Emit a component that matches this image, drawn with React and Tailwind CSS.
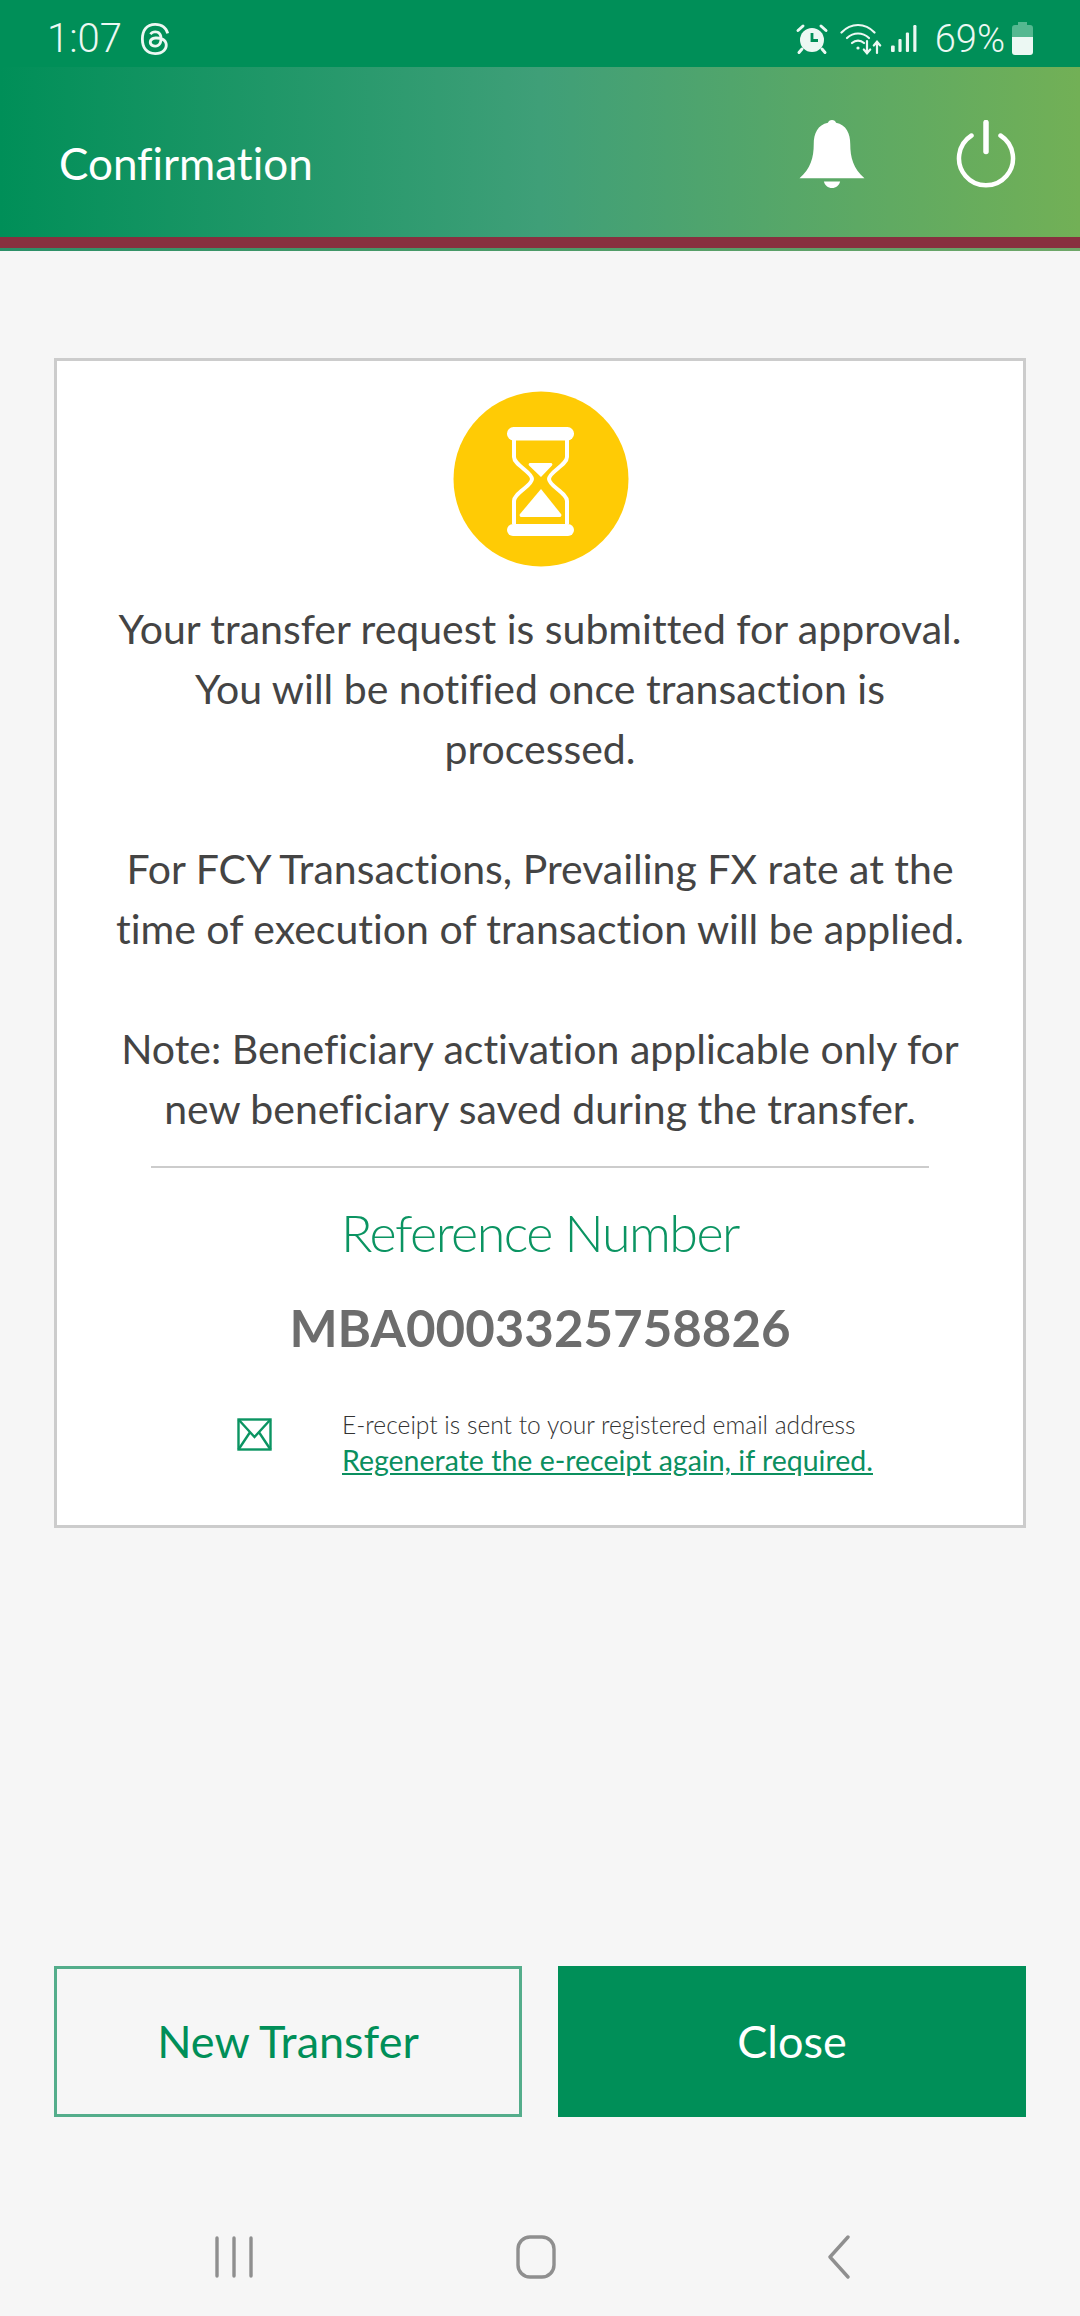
import { SiThreads } from "react-icons/si";

const bodyFont = { fontFamily: '"Lato", "Noto Sans", sans-serif', fontVariantLigatures: "none" };

function AlarmIcon() {
  return (
    <svg width="34" height="32" viewBox="0 0 34 32" fill="none">
      <circle cx="17" cy="17" r="12" fill="#ecf8f3" />
      <path d="M17 10v7.500h6" stroke="#008f58" strokeWidth="2.800" />
      <path d="M3 7.500 8 3M31 7.500 26 3M7 26l-3 3.500M27 26l3 3.500" stroke="#ecf8f3" strokeWidth="3" strokeLinecap="round" />
    </svg>
  );
}

function WifiIcon() {
  return (
    <svg width="42" height="32" viewBox="0 0 42 32" fill="none" stroke="#ecf8f3" strokeWidth="2.2" strokeLinecap="round">
      <path d="M1.5 9.5C11 -0.5 25 -0.5 34.5 9.5" />
      <path d="M7 15c6.5-6 15.5-6 22 0" />
      <path d="M12 20c3.5-3.2 8.5-3.2 12 0" />
      <circle cx="18" cy="25" r="1.6" fill="#ecf8f3" stroke="none" />
      <path d="M27 18v12M23.8 26.5l3.2 3.7 3.2-3.7" />
      <path d="M37 30V19M33.8 22.5l3.2-3.7 3.2 3.7" />
    </svg>
  );
}

function SignalIcon() {
  return (
    <svg width="26" height="30" viewBox="0 0 28 30" fill="#ecf8f3">
      <rect x="0" y="22" width="4" height="7" rx="1.2" />
      <rect x="8" y="15" width="3.4" height="14" rx="1.2" />
      <rect x="16" y="8" width="3.4" height="21" rx="1.2" />
      <rect x="24" y="0" width="3.4" height="29" rx="1.2" />
    </svg>
  );
}

function BatteryIcon() {
  return (
    <svg width="21" height="33" viewBox="0 0 21 33">
      <path d="M6 0h9v3h3a3 3 0 0 1 3 3v9H0V6a3 3 0 0 1 3-3h3z" fill="#55b890" />
      <path d="M0 15h21v15a3 3 0 0 1-3 3H3a3 3 0 0 1-3-3z" fill="#ecf8f3" />
    </svg>
  );
}

function BellIcon() {
  return (
    <svg width="66" height="68" viewBox="0 0 64 67" fill="#fff">
      <path d="M32 0c2 0 3.600 1.200 4 2.800C46 5 50 13 50 24c0 13 3 24 14 33.500H0C11 48 14 37 14 24 14 13 18 5 28 2.800 28.400 1.200 30 0 32 0z" />
      <path d="M24 60.500h16c-1 3.800-4 6.500-8 6.500s-7-2.700-8-6.500z" />
    </svg>
  );
}

function PowerIcon() {
  return (
    <svg width="60" height="68" viewBox="0 0 60 68" fill="none" stroke="#fff" strokeLinecap="round">
      <path d="M30 2.500v29" strokeWidth="5.500" />
      <path d="M15.500 15.500a27 27 0 1 0 29 0" strokeWidth="4.500" />
    </svg>
  );
}

function HourglassBadge() {
  return (
    <svg className="ml-[2px]" width="176" height="176" viewBox="0 0 176 176">
      <circle cx="88" cy="88" r="87.500" fill="#ffcb05" />
      <rect x="54" y="36" width="67" height="13.500" rx="6.500" fill="#fff" />
      <rect x="54" y="133" width="67" height="12" rx="6" fill="#fff" />
      <path
        d="M61 49v17c0 8 18 15 18 22s-18 14-18 22v23M114 49v17c0 8-18 15-18 22s18 14 18 22v23"
        fill="none"
        stroke="#fff"
        strokeWidth="4"
      />
      <path d="M77 72h21a1.500 1.500 0 0 1 1 2.500L88 86 76 74.500a1.500 1.500 0 0 1 1-2.500z" fill="#fff" />
      <path d="M88 98l20 25c1 1.500 0 3-1.500 3h-38c-1.500 0-2.500-1.500-1.500-3z" fill="#fff" />
    </svg>
  );
}

function EnvelopeIcon() {
  return (
    <svg width="35" height="33" viewBox="0 0 35 33" fill="none" stroke="#0b9462" strokeWidth="2.400">
      <rect x="1.500" y="1.500" width="32" height="30" />
      <path d="M1.500 1.500 17.500 19l16-17.500M1.500 31.500l11-16.500M33.500 31.500l-11-16.500" />
    </svg>
  );
}

function StatusBar() {
  return (
    <div className="flex h-[67px] items-center justify-between bg-[#008f58] pl-[47px] pr-[47px] pt-[10px] text-[#ecf8f3]" style={bodyFont}>
      <div className="flex items-center gap-[17px]">
        <span className="text-[40px] font-light leading-none" style={{ fontFamily: '"Roboto", sans-serif' }}>1:07</span>
        <SiThreads className="h-[36px] w-[32px]" />
      </div>
      <div className="flex items-center">
        <AlarmIcon />
        <div className="ml-[11px]"><WifiIcon /></div>
        <div className="ml-[9px]"><SignalIcon /></div>
        <span className="ml-[18px] text-[38px] font-light leading-none" style={{ fontFamily: '"Roboto", sans-serif' }}>69%</span>
        <div className="ml-[7px]"><BatteryIcon /></div>
      </div>
    </div>
  );
}

function Header() {
  return (
    <header>
      <div className="flex h-[170px] items-center justify-between bg-[linear-gradient(90deg,#008f58_0%,#3f9f78_50%,#72b056_100%)] pl-[59px] pr-[64px]">
        <h1 className="pt-[22px] text-[44px] font-normal leading-none text-white" style={bodyFont}>Confirmation</h1>
        <div className="flex items-center gap-[91px] pt-[4px]">
          <BellIcon />
          <PowerIcon />
        </div>
      </div>
      <div className="h-[11px] bg-[#88303f]" />
      <div className="h-[3px] bg-[linear-gradient(90deg,#2b8f68,#6fa768)]" />
    </header>
  );
}

function ConfirmationCard() {
  return (
    <section className="mx-[54px] mt-[107px] flex h-[1170px] flex-col items-center border-[3px] border-[#cccccc] bg-white pt-[30px]" style={bodyFont}>
      <HourglassBadge />
      <div className="mt-[32px] w-full text-center text-[41px] leading-[60px] text-[#444444]">
        <p>Your transfer request is submitted for approval.<br />You will be notified once transaction is<br />processed.</p>
        <p className="mt-[60px]">For FCY Transactions, Prevailing FX rate at the<br />time of execution of transaction will be applied.</p>
        <p className="mt-[60px]">Note: Beneficiary activation applicable only for<br />new beneficiary saved during the transfer.</p>
      </div>
      <div className="mt-[27px] h-[2px] w-[778px] bg-[#cccccc]" />
      <h2 className="mt-[33px] text-[52px] font-light leading-[62px] tracking-[-1.5px] text-[#0b9462]">Reference Number</h2>
      <p className="mt-[35px] text-[51px] font-bold leading-[60px] text-[#6d6d6d]">MBA0003325758826</p>
      <div className="mt-[50px] flex w-full pl-[180px]">
        <div className="pt-[10px]"><EnvelopeIcon /></div>
        <div className="ml-[70px]">
          <p className="text-[24.600px] font-light leading-[34px] text-[#333333]">E-receipt is sent to your registered email address</p>
          <a className="block text-[28.500px] leading-[36px] text-[#0b8f5f] underline">Regenerate the e-receipt again, if required.</a>
        </div>
      </div>
    </section>
  );
}

function Actions() {
  return (
    <div className="mx-[54px] mt-[438px] grid grid-cols-2 gap-[36px] text-[45px] leading-none" style={bodyFont}>
      <button className="h-[151px] border-[3px] border-[#54ad8b] text-[#008f58]">New Transfer</button>
      <button className="h-[151px] bg-[#008f58] text-white">Close</button>
    </div>
  );
}

function NavBar() {
  return (
    <nav className="mt-[118px] flex items-center pl-[215px]">
      <svg width="38" height="42" viewBox="0 0 38 42" stroke="#8f8f8f" strokeWidth="3.400" strokeLinecap="round">
        <path d="M2 2v38M19 2v38M36 2v38" />
      </svg>
      <svg className="ml-[263px]" width="40" height="44" viewBox="0 0 40 44" fill="none" stroke="#8f8f8f" strokeWidth="3.400">
        <rect x="2" y="2" width="36" height="40" rx="12" />
      </svg>
      <svg className="ml-[272px]" width="22" height="44" viewBox="0 0 22 44" fill="none" stroke="#8f8f8f" strokeWidth="3.400" strokeLinecap="round" strokeLinejoin="round">
        <path d="M20 2 2 22l18 20" />
      </svg>
    </nav>
  );
}

export default function App() {
  return (
    <main className="h-[2316px] w-[1080px] overflow-hidden bg-[#f6f6f6]">
      <StatusBar />
      <Header />
      <ConfirmationCard />
      <Actions />
      <NavBar />
    </main>
  );
}
